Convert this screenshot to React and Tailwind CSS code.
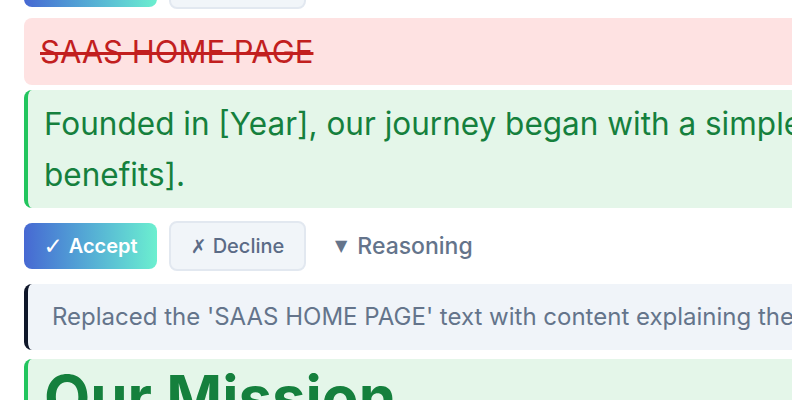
import React from 'react';

function ActionRow({ showReasoning }) {
    return (
        <div className="flex items-center gap-3">
            <button className="h-[46px] w-[133px] flex items-center justify-center gap-1.5 rounded-lg bg-gradient-to-r from-[#4768d2] to-[#6cefcf] text-white text-[20px] font-semibold">
                <span className="font-['DejaVu_Sans',sans-serif] text-[23px] font-bold">✓</span>
                <span>Accept</span>
            </button>
            <button className="h-[50px] w-[137px] flex items-center justify-center gap-1.5 rounded-lg border-2 border-[#e2e8f0] bg-[#f1f5f9] text-[#5b6b86] text-[20px] font-medium">
                <span className="font-['DejaVu_Sans',sans-serif] text-[19px]">✗</span>
                <span>Decline</span>
            </button>
            {showReasoning && (
                <button className="ml-[17px] flex items-center gap-2.5 text-[#64748b] text-[23px] font-medium">
                    <span className="font-['DejaVu_Sans',sans-serif] text-[16px]">▼</span>
                    <span>Reasoning</span>
                </button>
            )}
        </div>
    );
}

export default function App() {
    return (
        <div className="w-[792px] h-[400px] overflow-hidden bg-white font-['Inter',sans-serif]">
            <div className="w-[1400px] pl-6 -mt-[41px] flex flex-col">
                {/* previous change, mostly scrolled away */}
                <ActionRow showReasoning={false} />

                {/* removed text */}
                <div className="mt-[9px] rounded-lg bg-[#fee2e2] py-2 px-4 text-[31px] leading-[51px] text-[#c21f1f] line-through decoration-[3px]">
                    SAAS HOME PAGE
                </div>

                {/* added text */}
                <div className="mt-[5px] rounded-lg border-l-4 border-[#22c55e] bg-[#e4f6e9] py-2 px-4 text-[31.5px] leading-[51px] text-[#15803d]">
                    <span className="block whitespace-nowrap">
                        Founded in [Year], our journey began with a simple idea: to [solve a problem] for [target audience] and deliver [key
                    </span>
                    <span className="block">benefits].</span>
                </div>

                <div className="mt-[13px]">
                    <ActionRow showReasoning={true} />
                </div>

                {/* reasoning */}
                <div className="mt-[13px] rounded-lg border-l-4 border-[#0f172a] bg-[#f0f4f9] py-3.5 pl-6 pr-4 text-[24px] leading-[1.6] text-[#64748b] whitespace-nowrap">
                    Replaced the 'SAAS HOME PAGE' text with content explaining the company's founding story, mission and the value it delivers to customers.
                </div>

                {/* next change */}
                <div className="mt-[9px] rounded-lg border-l-4 border-[#22c55e] bg-[#e4f6e9] pt-0.5 pb-2 px-4 text-[60px] font-bold leading-[1.2] text-[#15803d]">
                    Our Mission
                </div>
            </div>
        </div>
    );
}
